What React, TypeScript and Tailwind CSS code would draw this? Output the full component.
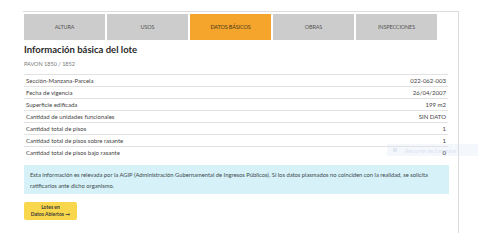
const tabs = ["ALTURA", "USOS", "DATOS BÁSICOS", "OBRAS", "INSPECCIONES"];

const rows = [
  ["Sección-Manzana-Parcela", "022-062-003"],
  ["Fecha de vigencia", "26/04/2007"],
  ["Superficie edificada", "199 m2"],
  ["Cantidad de unidades funcionales", "SIN DATO"],
  ["Cantidad total de pisos", "1"],
  ["Cantidad total de pisos sobre rasante", "1"],
  ["Cantidad total de pisos bajo rasante", "0"],
];

export default function App() {
  return (
    <div className="relative w-[500px] h-[245px] bg-white overflow-hidden" style={{ fontFamily: "Lato, 'Open Sans', sans-serif" }}>
      {/* Faint map control showing through */}
      <div className="absolute left-[387px] top-[144px] w-[91px] h-[12px] bg-[#eef3fb] opacity-60 flex items-center gap-[8px] pl-[6px] text-[6px] text-[#c3cfe6]">
        <span className="w-[4px] h-[4px] bg-[#cfd9ec]" />
        <span>Recorte rectangular</span>
      </div>

      <div className="relative ml-[23px] mt-[11px] w-[436px] h-[222px] border-t border-r border-[#dcdcdc] pl-[1px] pr-[10px] pt-[2px]">
        {/* Tabs */}
        <div className="flex gap-[2px]">
          {tabs.map((t) => (
            <div
              key={t}
              className={`w-[81px] h-[26px] flex items-center justify-center text-[5.5px] tracking-tight ${
                t === "DATOS BÁSICOS" ? "bg-[#f5a42c] text-[#4a3a1a]" : "bg-[#cccccc] text-[#555]"
              }`}
            >
              {t}
            </div>
          ))}
        </div>

        {/* Title */}
        <h2 className="mt-[3px] text-[9.5px] font-bold text-[#2a2a2a] leading-[14px]">Información básica del lote</h2>
        <p className="mt-[2px] text-[5.5px] text-[#777] leading-[10px]">PAVON 1850 / 1852</p>

        {/* Data table */}
        <div className="mt-[5px] w-[424px]">
          {rows.map(([k, v]) => (
            <div key={k} className="flex justify-between items-center h-[12px] border-t border-[#e2e2e2] px-[2px] text-[6px] text-[#444]">
              <span>{k}</span>
              <span>{v}</span>
            </div>
          ))}
        </div>

        {/* Info box */}
        <div className="mt-[7px] w-[425px] h-[29px] bg-[#d6f1f8] px-[6px] pt-[4px] text-[5.8px] leading-[11px] text-[#3d4a4d]">
          Esta información es relevada por la AGIP (Administración Gubernamental de Ingresos Públicos). Si los datos plasmados no coinciden con la realidad, se solicita ratificarlos ante dicho organismo.
        </div>

        {/* Button */}
        <button className="mt-[8px] w-[53px] h-[18px] rounded-[2px] bg-[#f9d74c] flex flex-col items-center justify-center text-[5px] font-bold leading-[7px] text-[#3a3a3a]">
          <span>Lotes en</span>
          <span>Datos Abiertos →</span>
        </button>
      </div>
    </div>
  );
}
